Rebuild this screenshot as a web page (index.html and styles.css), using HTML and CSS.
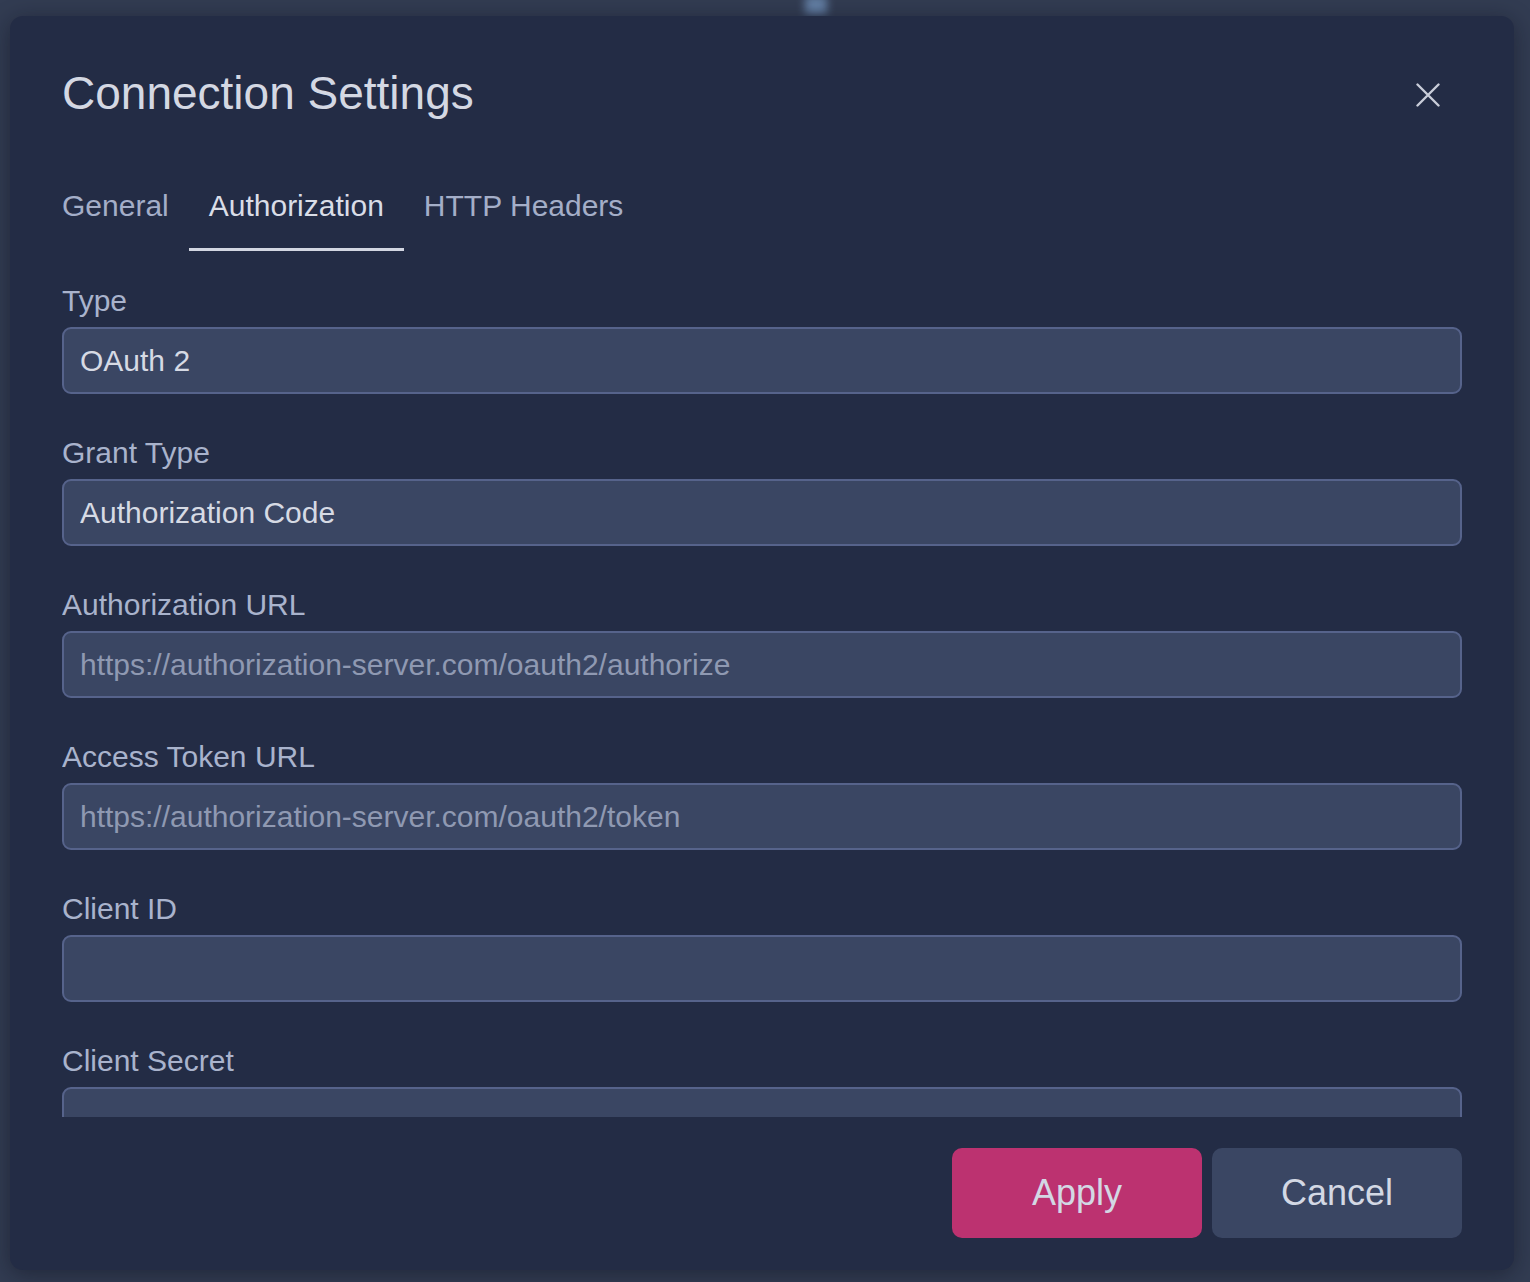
FILE: index.html
```html
<!DOCTYPE html>
<html lang="en">
<head>
<meta charset="utf-8">
<title>Connection Settings</title>
<link rel="stylesheet" href="styles.css">
</head>
<body>
<div class="backdrop-blob"></div>
<div class="dialog">
  <header class="dialog-header">
    <h1 class="dialog-title">Connection Settings</h1>
    <button class="close-btn" aria-label="Close">
      <svg width="24" height="24" viewBox="0 0 24 24" fill="none" stroke="currentColor" stroke-width="2.4" stroke-linecap="round"><path d="M1.5 1.5 L22.5 22.5 M22.5 1.5 L1.5 22.5"/></svg>
    </button>
  </header>
  <nav class="tabs">
    <div class="tab">General</div>
    <div class="tab tab-active">Authorization</div>
    <div class="tab">HTTP Headers</div>
  </nav>
  <div class="content">
    <div class="field">
      <label class="field-label">Type</label>
      <input class="field-input" type="text" value="OAuth 2" readonly>
    </div>
    <div class="field">
      <label class="field-label">Grant Type</label>
      <input class="field-input" type="text" value="Authorization Code" readonly>
    </div>
    <div class="field">
      <label class="field-label">Authorization URL</label>
      <input class="field-input" type="text" placeholder="https://authorization-server.com/oauth2/authorize">
    </div>
    <div class="field">
      <label class="field-label">Access Token URL</label>
      <input class="field-input" type="text" placeholder="https://authorization-server.com/oauth2/token">
    </div>
    <div class="field">
      <label class="field-label">Client ID</label>
      <input class="field-input" type="text">
    </div>
    <div class="field">
      <label class="field-label">Client Secret</label>
      <input class="field-input" type="text">
    </div>
  </div>
  <footer class="dialog-footer">
    <button class="btn btn-primary">Apply</button>
    <button class="btn btn-secondary">Cancel</button>
  </footer>
</div>
</body>
</html>
```

FILE: styles.css
```css
* { box-sizing: border-box; }

html, body {
  margin: 0;
  height: 100%;
}

body {
  background: #323c52;
  font-family: "Liberation Sans", Arial, Helvetica, sans-serif;
  padding: 16px 16px 12px 10px;
  overflow: hidden;
  position: relative;
}

.backdrop-blob {
  position: absolute;
  left: 805px;
  top: -4px;
  width: 22px;
  height: 18px;
  background: #6f8fb8;
  filter: blur(4px);
  opacity: 0.8;
}

.dialog {
  position: relative;
  width: 1504px;
  height: 1254px;
  background: #232c45;
  border-radius: 13px;
  box-shadow: 0 4px 22px rgba(10, 14, 26, 0.45);
  display: flex;
  flex-direction: column;
  padding: 0 52px 0 52px;
}

.dialog-header {
  display: flex;
  align-items: center;
  justify-content: space-between;
  padding-top: 50px;
}

.dialog-title {
  margin: 0;
  font-size: 46px;
  line-height: 54px;
  font-weight: 400;
  color: #d4d8e3;
}

.close-btn {
  background: none;
  border: 0;
  padding: 0;
  margin-right: 22px;
  margin-top: 4px;
  width: 24px;
  height: 24px;
  color: #c9cdd9;
  display: flex;
  align-items: center;
  justify-content: center;
  cursor: pointer;
}

.tabs {
  display: flex;
  margin-top: 56px;
  margin-left: -20px;
}

.tab {
  font-size: 30px;
  line-height: 34px;
  padding: 13px 20px 25px;
  color: #a4aec8;
  border-bottom: 3px solid transparent;
}

.tab-active {
  color: #d9dde7;
  border-bottom-color: #d2d6e1;
}

.content {
  flex: 1;
  overflow: hidden;
  padding-top: 33px;
}

.field {
  display: flex;
  flex-direction: column;
  gap: 9px;
  margin-bottom: 42px;
}

.field-label {
  font-size: 30px;
  line-height: 34px;
  color: #a9b3cc;
}

.field-input {
  height: 67px;
  width: 100%;
  background: #3a4663;
  border: 2px solid #56638b;
  border-radius: 9px;
  padding: 0 16px;
  font-family: "Liberation Sans", Arial, Helvetica, sans-serif;
  font-size: 30px;
  color: #d6dae4;
  outline: none;
}

.field-input::placeholder {
  color: #8f99b2;
}

.dialog-footer {
  display: flex;
  justify-content: flex-end;
  gap: 10px;
  padding: 31px 0 32px;
}

.btn {
  width: 250px;
  height: 90px;
  border: 0;
  border-radius: 10px;
  font-family: "Liberation Sans", Arial, Helvetica, sans-serif;
  font-size: 36px;
  color: #d3d8e4;
  cursor: pointer;
}

.btn-primary {
  background: #bc3270;
}

.btn-secondary {
  background: #3a4663;
}
```
